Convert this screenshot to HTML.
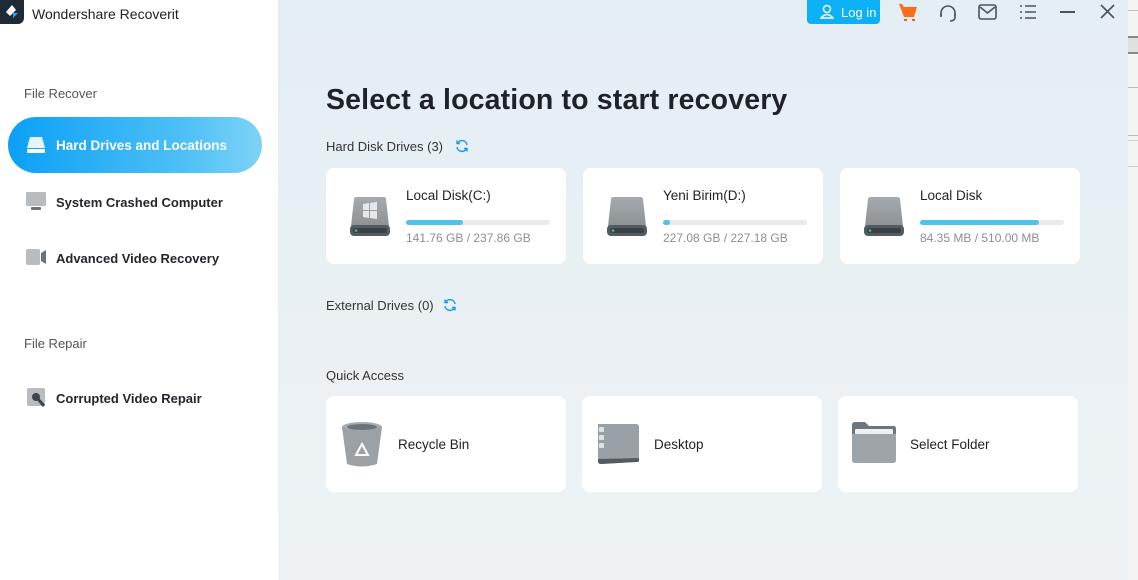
<!DOCTYPE html>
<html><head><meta charset="utf-8"><style>
*{margin:0;padding:0;box-sizing:border-box}
body{width:1138px;height:580px;overflow:hidden;font-family:"Liberation Sans","DejaVu Sans",sans-serif;position:relative;background:#fff}
.side{position:absolute;left:0;top:0;width:278px;height:580px;background:#fff}
.main{position:absolute;left:278px;top:0;width:850px;height:580px;background:linear-gradient(180deg,#e3eef4 0%,#e9f0f4 50%,#eef2f5 100%)}
.strip{position:absolute;left:1128px;top:0;width:10px;height:580px;background:#f4f4f4}
.a{position:absolute}
.t{position:absolute;white-space:nowrap}
.card{position:absolute;background:#fff;border-radius:8px}
.bar{position:absolute;height:5px;border-radius:3px;background:#e9eaeb}
.bar i{display:block;height:5px;border-radius:3px;background:#4cc3ea}
.nav{position:absolute;left:56px;font-size:13px;font-weight:bold;color:#23262b}
.dn{font-size:13.5px;color:#222}
</style></head><body>
<div class="side">
  <div class="a" style="left:0;top:0;width:24px;height:24px;background:#1e2a38;border-radius:0 0 6px 0"></div>
  <svg class="a" style="left:3px;top:3px" width="18" height="18" viewBox="0 0 18 18"><path d="M9 2 L3 9 L7 13 L13 7 Z" fill="#fff"/><path d="M10 10 L15 10 L10 15 Z" fill="#2da0ff"/></svg>
  <div class="t" style="left:32px;top:6px;font-size:14px;color:#222">Wondershare Recoverit</div>
  <div class="t" style="left:24px;top:86px;font-size:13px;color:#555">File Recover</div>
  <div class="a" style="left:8px;top:117px;width:254px;height:56px;border-radius:28px;background:linear-gradient(90deg,#0aa0f5,#4fc0f5 70%,#7dd3f5)"></div>
  <svg class="a" style="left:26px;top:136px" width="20" height="18"><path d="M4 1h12l3 11H1z" fill="#e8f4fd"/><rect x="1" y="13" width="18" height="4" rx="1" fill="#fff"/></svg>
  <div class="t" style="left:56px;top:138px;font-size:13.5px;font-weight:bold;color:#fff">Hard Drives and Locations</div>
  <svg class="a" style="left:26px;top:192px" width="20" height="18"><rect x="0" y="0" width="20" height="14" rx="1" fill="#b9bcbf"/><rect x="5" y="15" width="10" height="3" rx="1" fill="#6e7378"/></svg>
  <div class="nav" style="top:195px">System Crashed Computer</div>
  <svg class="a" style="left:26px;top:249px" width="20" height="18"><rect x="0" y="0" width="14" height="16" rx="2" fill="#b9bcbf"/><path d="M15 4 L20 1 V15 L15 12Z" fill="#6e7378"/></svg>
  <div class="nav" style="top:251px">Advanced Video Recovery</div>
  <div class="t" style="left:24px;top:336px;font-size:13px;color:#555">File Repair</div>
  <svg class="a" style="left:27px;top:388px" width="20" height="20"><rect x="0" y="0" width="18" height="18" rx="2" fill="#b9bcbf"/><circle cx="9" cy="9" r="4" fill="#3f4449"/><path d="M11 11 L17 18" stroke="#3f4449" stroke-width="3"/></svg>
  <div class="nav" style="top:391px">Corrupted Video Repair</div>
</div>
<div class="main"></div>
<div class="strip">
  <div class="a" style="left:0;top:10px;width:10px;height:1px;background:#bbb"></div>
  <div class="a" style="left:0;top:36px;width:10px;height:18px;background:#e0e0e0;border-top:2px solid #888;border-bottom:2px solid #888"></div>
  <div class="a" style="left:0;top:87px;width:10px;height:1px;background:#bbb"></div>
  <div class="a" style="left:0;top:135px;width:10px;height:1px;background:#bbb"></div>
  <div class="a" style="left:0;top:140px;width:10px;height:1px;background:#ccc"></div>
  <div class="a" style="left:0;top:166px;width:10px;height:1px;background:#ccc"></div>
</div>
<div class="a" style="left:807px;top:0;width:73px;height:24px;background:#0bb0f5;border-radius:0 0 4px 4px"></div>
<svg class="a" style="left:820px;top:4px" width="14" height="15"><circle cx="7" cy="5" r="3.5" fill="none" stroke="#fff" stroke-width="1.5"/><path d="M1 14 Q7 7 13 14 Z" fill="none" stroke="#fff" stroke-width="1.5"/></svg>
<div class="t" style="left:841px;top:5px;font-size:13px;color:#fff">Log in</div>
<svg class="a" style="left:898px;top:3px" width="20" height="19"><path d="M1 1h3l2 3h13l-3 10H6z" fill="#fb6d1b"/><rect x="6" y="16" width="3" height="2" fill="#f45c0e"/><rect x="14" y="16" width="3" height="2" fill="#f45c0e"/></svg>
<svg class="a" style="left:938px;top:3px" width="20" height="20" fill="none" stroke="#4b5359" stroke-width="1.6"><path d="M3 13 V10 A7 7 0 0 1 17 10 V13"/><path d="M3 11 v3 M17 11 v4 Q16 18 12 18"/></svg>
<svg class="a" style="left:978px;top:3px" width="20" height="18" fill="none" stroke="#4b5359" stroke-width="1.6"><rect x="1" y="2" width="17" height="14" rx="2"/><path d="M2 4 L9.5 10 L17 4"/></svg>
<svg class="a" style="left:1019px;top:4px" width="18" height="16" stroke="#4b5359" stroke-width="1.6"><path d="M1 2h2M1 8h2M1 14h2M6 2h11M6 8h11M6 14h11"/></svg>
<div class="a" style="left:1060px;top:11px;width:15px;height:1.6px;background:#4b5359"></div>
<svg class="a" style="left:1100px;top:4px" width="15" height="15" stroke="#4b5359" stroke-width="1.6"><path d="M1 1L14 14M14 1L1 14"/></svg>

<div class="t" style="left:326px;top:84px;font-size:28.5px;font-weight:bold;color:#1f2329;letter-spacing:0.15px">Select a location to start recovery</div>
<div class="t" style="left:326px;top:139px;font-size:13px;color:#333">Hard Disk Drives (3)</div>
<svg class="a" style="left:455px;top:139px" width="14" height="14" fill="none" stroke="#1a9df0" stroke-width="1.5"><path d="M12 6 A5 5 0 0 0 2.5 4.5 M2 8 A5 5 0 0 0 11.5 9.5"/><path d="M2 1.5v3h3M12 12.5v-3h-3"/></svg>

<div class="card" style="left:326px;top:168px;width:240px;height:96px"></div>
<div class="card" style="left:583px;top:168px;width:240px;height:96px"></div>
<div class="card" style="left:840px;top:168px;width:240px;height:96px"></div>

<svg class="a" style="left:349px;top:197px" width="42" height="40"><defs><linearGradient id="g" x1="0" y1="0" x2="0" y2="1"><stop offset="0" stop-color="#a4aaae"/><stop offset="1" stop-color="#8c9296"/></linearGradient></defs><path d="M5 2 Q5 0 8 0 H34 Q37 0 37 2 L40 29 H2 Z" fill="url(#g)"/><rect x="1" y="28" width="40" height="11" rx="4" fill="#545c62"/><rect x="4" y="31" width="34" height="5" rx="2" fill="#3b4247"/><circle cx="7" cy="33.5" r="1.3" fill="#22d28a"/><path d="M14 7l6-1v7h-6zM21 6l7-1v8h-7zM14 14h6v7l-6-1zM21 14h7v8l-7-1z" fill="#e6e9eb"/></svg>
<div class="t dn" style="left:406px;top:188px">Local Disk(C:)</div>
<div class="bar" style="left:406px;top:220px;width:144px"><i style="width:57px"></i></div>
<div class="t" style="left:406px;top:231px;font-size:12px;color:#8a8f94">141.76 GB / 237.86 GB</div>

<svg class="a" style="left:606px;top:197px" width="42" height="40"><path d="M5 2 Q5 0 8 0 H34 Q37 0 37 2 L40 29 H2 Z" fill="url(#g)"/><rect x="1" y="28" width="40" height="11" rx="4" fill="#545c62"/><rect x="4" y="31" width="34" height="5" rx="2" fill="#3b4247"/><circle cx="7" cy="33.5" r="1.3" fill="#22d28a"/></svg>
<div class="t dn" style="left:663px;top:188px">Yeni Birim(D:)</div>
<div class="bar" style="left:663px;top:220px;width:144px"><i style="width:7px"></i></div>
<div class="t" style="left:663px;top:231px;font-size:12px;color:#8a8f94">227.08 GB / 227.18 GB</div>

<svg class="a" style="left:863px;top:197px" width="42" height="40"><path d="M5 2 Q5 0 8 0 H34 Q37 0 37 2 L40 29 H2 Z" fill="url(#g)"/><rect x="1" y="28" width="40" height="11" rx="4" fill="#545c62"/><rect x="4" y="31" width="34" height="5" rx="2" fill="#3b4247"/><circle cx="7" cy="33.5" r="1.3" fill="#22d28a"/></svg>
<div class="t dn" style="left:920px;top:188px">Local Disk</div>
<div class="bar" style="left:920px;top:220px;width:144px"><i style="width:119px"></i></div>
<div class="t" style="left:920px;top:231px;font-size:12px;color:#8a8f94">84.35 MB / 510.00 MB</div>

<div class="t" style="left:326px;top:298px;font-size:13px;color:#333">External Drives (0)</div>
<svg class="a" style="left:443px;top:298px" width="14" height="14" fill="none" stroke="#1a9df0" stroke-width="1.5"><path d="M12 6 A5 5 0 0 0 2.5 4.5 M2 8 A5 5 0 0 0 11.5 9.5"/><path d="M2 1.5v3h3M12 12.5v-3h-3"/></svg>

<div class="t" style="left:326px;top:368px;font-size:13px;color:#333">Quick Access</div>
<div class="card" style="left:326px;top:396px;width:240px;height:96px"></div>
<div class="card" style="left:582px;top:396px;width:240px;height:96px"></div>
<div class="card" style="left:838px;top:396px;width:240px;height:96px"></div>

<svg class="a" style="left:341px;top:422px" width="42" height="46"><ellipse cx="21" cy="5" rx="20" ry="5" fill="#a6acb0"/><path d="M1 5 L6 42 Q21 47 36 42 L41 5 Q21 12 1 5Z" fill="#9ba1a5"/><ellipse cx="21" cy="5" rx="15" ry="3" fill="#6c7378"/><path d="M21 22 L27 33 H15Z" fill="none" stroke="#fff" stroke-width="2"/></svg>
<div class="t dn" style="left:398px;top:437px">Recycle Bin</div>

<svg class="a" style="left:596px;top:423px" width="44" height="42"><path d="M2 1 H40 Q43 1 43 4 V38 Q43 39 40 39 L5 41 Q2 41 2 38Z" fill="#9aa1a6"/><path d="M2 36 L43 35 V38 Q43 39 40 39 L5 41 Q2 41 2 38Z" fill="#545c62"/><rect x="3" y="4" width="5" height="5" rx="1" fill="#dde0e2"/><rect x="3" y="12" width="5" height="5" rx="1" fill="#dde0e2"/><rect x="3" y="20" width="5" height="5" rx="1" fill="#dde0e2"/></svg>
<div class="t dn" style="left:654px;top:437px">Desktop</div>

<svg class="a" style="left:851px;top:422px" width="46" height="42"><path d="M1 3 Q1 0 4 0 H14 L18 4 H43 Q45 4 45 7 V20 H1Z" fill="#6e767c"/><rect x="4" y="7" width="38" height="12" rx="1" fill="#eef0f1"/><path d="M1 12 H45 V38 Q45 41 42 41 H4 Q1 41 1 38Z" fill="#9ea5aa"/></svg>
<div class="t dn" style="left:910px;top:437px">Select Folder</div>
</body></html>
